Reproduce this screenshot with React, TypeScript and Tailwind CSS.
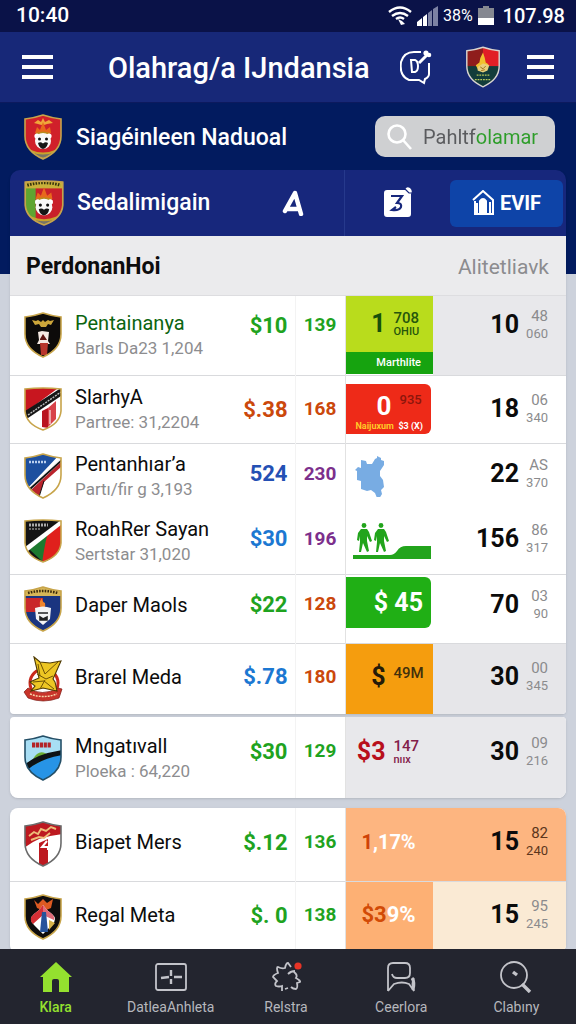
import { useState } from 'react';
import type { ReactNode } from 'react';
import clsx from 'clsx';

type Row = {
  id: string;
  name: string;
  nameColor?: string;
  sub?: string;
  price: string;
  priceColor: string;
  count: string;
  countColor: string;
  badge: ReactNode;
  badgeCell?: string;
  rank: string;
  small: [string, string];
  smallColor?: string;
  rankCell?: string;
  height: string;
  pad?: string;
};

const SHIELD = 'M2 5Q11 4 20 1Q29 4 38 5V22Q38 37 20 45Q2 37 2 22Z';
const FLAT = 'M2 3Q20 1 38 3V25Q37 38 20 44Q3 38 2 25Z';

function Crest({ id, className = 'w-10 h-[46px]' }: { id: string; className?: string }) {
  const clip = `crest-${id}`;
  const shape = ['slarhya', 'roahrer', 'nasional'].includes(id) ? FLAT : SHIELD;
  const bear = (
    <>
      <path d="M12 19l2-6 3 3 3-8 3 8 4-3 1 6-8 3z" fill="#e8681c" />
      <path d="M13 19q7-3 14 0v2H13z" fill="#b98a1e" />
      <circle cx="14" cy="22" r="2.6" fill="#fff" />
      <circle cx="26" cy="22" r="2.6" fill="#fff" />
      <ellipse cx="20" cy="27" rx="8" ry="8" fill="#f8f8f8" />
      <circle cx="16.5" cy="25" r="1.5" fill="#111" />
      <circle cx="23.5" cy="25" r="1.5" fill="#111" />
      <path d="M15 29q2.5-1.5 5 .5q2.500-2 5-.5q-1 5-5 6q-4-1-5-6z" fill="#161616" />
      <path d="M2 33l6 3q12 5 24 0l6-3-2 9q-16 6-32 0z" fill="#c9a32b" />
      <path d="M8 38q12 5 24 0v3q-12 5-24 0z" fill="#777465" />
    </>
  );
  return (
    <svg viewBox="0 0 40 46" className={clsx('shrink-0', className)} aria-hidden="true">
      <clipPath id={clip}>
        <path d={shape} />
      </clipPath>
      {id === 'brarel' ? (
        <>
          <circle cx="21" cy="27" r="14" fill="#fff" stroke="#c92a1e" strokeWidth="3" />
          <path d="M5 32q14 9 30 0l4 1-3 9q-16 6-31 0l-4-6z" fill="#c8342a" stroke="#7c1812" strokeWidth=".7" />
          <path d="M7 38q13 5 27 0" stroke="#f6d5a8" strokeWidth="1.4" strokeDasharray="2 1" fill="none" />
          <path d="M11 1l6 5 10 1 11-2-8 18 2 3 2 9-14-3-12 3 4-5-5-4 9-4z" fill="#edc623" stroke="#4e3a04" strokeWidth="1.1" />
          <path d="M17 6l5 12L36 5M14 18l9 5 7-3M10 26l11-1 10 8M22 24l-5 9M15 8l2 12" stroke="#6e5206" strokeWidth="1" fill="none" />
        </>
      ) : (
        <>
          <g clipPath={`url(#${clip})`}>
            {id === 'national' && (
              <>
                <rect width="40" height="46" fill="#d0202a" />
                <path d="M11 9l4-3 3 2 2-4 2 4 4-2 4 3-6 1q-4 2-9 0z" fill="#f0a63a" />
                {bear}
              </>
            )}
            {id === 'nasional' && (
              <>
                <rect width="40" height="46" fill="#c9202a" />
                <rect width="12" height="46" fill="#5fa531" />
                <rect width="40" height="9" fill="#c9b13a" />
                <path d="M4 6q16-5 32 0" stroke="#35320c" strokeWidth="3" strokeDasharray="1.5 1.2" fill="none" />
                {bear}
              </>
            )}
            {id === 'garuda' && (
              <>
                <rect width="40" height="46" fill="#123c3a" />
                <rect width="20" height="22" fill="#8f1d1c" />
                <rect x="20" width="20" height="22" fill="#e11f26" />
                <path d="M17 13l3-6 2 6 1 5 3 2-2 7h-9l-3-6 4-3z" fill="#f0c12f" />
                <path d="M14 23l6-4 7 2-2 6-5 2-6-2z" fill="#e7d07d" />
                <path d="M17 23l3 2 3-3M18 27l4-1" stroke="#9a6a17" strokeWidth="1" fill="none" />
                <path d="M13 32h14M11 37h18" stroke="#b8c75a" strokeWidth="1.6" strokeDasharray="2 1" />
              </>
            )}
            {id === 'pentai' && (
              <>
                <rect width="40" height="46" fill="#0d0b0a" />
                <path d="M9 8l4 1 2-1 3 2 2-2 2 2 3-2 2 1 4-1-3 5-3-1-2 3h-5l-2-3-4 1z" fill="#cda63a" />
                <path d="M15 20l4-1 7 1-1 9 2 3H14l2-4z" fill="#f5e9e3" />
                <path d="M17 27l3-5 4 6h-7z" fill="#5d1512" />
                <path d="M17 31h8l-1 12h-6z" fill="#b8352b" />
              </>
            )}
            {id === 'slarhya' && (
              <>
                <rect width="40" height="46" fill="#fff" />
                <path d="M0 0h38L0 28z" fill="#c8161f" />
                <path d="M2 25L38 2v8L2 34z" fill="#161616" />
                <path d="M5 29L38 6" stroke="#bdbdbd" strokeWidth="1.4" strokeDasharray="2 1" />
                <path d="M19 25l6-3v20l-6-1z" fill="#b91520" />
                <path d="M25 22l8-7v18l-8 8z" fill="#d8434a" />
                <path d="M27 24v14" stroke="#f6d3d3" strokeWidth="1.4" fill="none" />
              </>
            )}
            {id === 'pentanh' && (
              <>
                <rect width="40" height="46" fill="#fff" />
                <path d="M0 0h38L4 36H0z" fill="#1d4f9f" />
                <path d="M39 4L5 35l3 5L39 13z" fill="#f3f3f3" />
                <path d="M39 8L8 37l8 6 5-14L39 13z" fill="#b9232b" />
                <path d="M39 7L7 36" stroke="#111" strokeWidth="1.8" />
                <path d="M21 28l-5 16" stroke="#111" strokeWidth="1" />
                <path d="M6 9h18" stroke="#bcd0ef" strokeWidth="2.4" strokeDasharray="2 1" />
              </>
            )}
            {id === 'roahrer' && (
              <>
                <rect width="40" height="46" fill="#141414" />
                <path d="M40 2L6 31l16 15 18-6z" fill="#1c7a2f" />
                <path d="M40 3L24 18q-3 12-5 28h21z" fill="#e0201c" />
                <path d="M38 2L2 29l3 4L38 7z" fill="#fff" />
                <path d="M6 7h19" stroke="#aaa" strokeWidth="3" strokeDasharray="2 1" />
                <path d="M6 11h12" stroke="#888" strokeWidth="1.4" strokeDasharray="2 1" />
              </>
            )}
            {id === 'daper' && (
              <>
                <rect width="40" height="46" fill="#1a3580" />
                <path d="M2 12h18v14H2z" fill="#c9272a" />
                <rect width="40" height="10" fill="#d7b657" />
                <path d="M5 7q15-4 30 0" stroke="#3a2a0b" strokeWidth="2.6" strokeDasharray="1.6 1.2" fill="none" />
                <path d="M18 22q-3-5 1-10 0 4 3 5 1 3-1 6z" fill="#f0852c" />
                <path d="M12 22q8-3 16 0l-1 11-7 6-7-6z" fill="#f4f4f4" />
                <path d="M15 27h10M17 31l3 2 4-2v3h-7z" stroke="#222" strokeWidth="1.6" fill="#222" />
              </>
            )}
            {id === 'mngati' && (
              <>
                <rect width="40" height="46" fill="#a8def4" />
                <path d="M0 30L40 16v30H0z" fill="#2794e6" />
                <path d="M10 24q5-9 12-6l5 3-16 9z" fill="#6cae34" />
                <path d="M1 30q12-11 38-15v5Q16 24 3 36z" fill="#0d1215" />
                <path d="M9 10h19" stroke="#b32328" strokeWidth="5" strokeDasharray="3.2 .7" />
              </>
            )}
            {id === 'biapet' && (
              <>
                <rect width="40" height="46" fill="#fff" />
                <path d="M0 0h40v13Q14 15 0 28z" fill="#bd1920" />
                <path d="M6 15l5-4 4 2 3-5 5 2 5-4 5 2M8 19l8-3 5 1 6-5" stroke="#eebd79" strokeWidth="1.9" fill="none" />
                <path d="M16 22l9-4v27h-9z" fill="#bd1920" />
                <path d="M24 20l-5 6h6v3" stroke="#fff" strokeWidth="2" fill="none" />
              </>
            )}
            {id === 'regal' && (
              <>
                <rect width="40" height="46" fill="#0e0c0d" />
                <path d="M11 6l4 4 5-5 4 4 6-4-2 9-7 3-7-3z" fill="#dd5a22" />
                <path d="M20 11q4 6 9 9 6 5 0 11l-9 9-9-9q-6-6 0-11 6-4 9-9z" fill="#fff" />
                <path d="M20 11q-3 5-9 9-6 5-1 10l10-9z" fill="#d52f35" />
                <path d="M20 11q4 6 9 9 3 3 2 6l-11-5z" fill="#e06a78" />
                <path d="M19 18h4l2 20h-8z" fill="#26539b" />
                <path d="M26 26l6 3-6 7z" fill="#d6b24b" />
              </>
            )}
          </g>
          <path
            d={shape}
            fill="none"
            stroke={id === 'mngati' ? '#244f67' : id === 'biapet' ? '#6b6b6b' : id === 'garuda' ? '#d8d4cf' : '#c7a44a'}
            strokeWidth="1.6"
          />
        </>
      )}
    </svg>
  );
}

function Stat({ big, top, bottom, bigColor, color }: { big: string; top: string; bottom?: string; bigColor: string; color: string }) {
  return (
    <div className="flex items-center gap-2">
      <span className={clsx('w-10 text-right text-[25px] leading-8 font-bold', bigColor)}>{big}</span>
      <span className={clsx('flex flex-col text-[15px] leading-4', color)}>
        <span>{top}</span>
        {bottom && <span className="text-[11px] leading-3">{bottom}</span>}
      </span>
    </div>
  );
}

const GREEN = 'text-[#1fa31f]';
const ORANGE = 'text-[#cb480c]';
const BLUE = 'text-[#1c78d2]';
const PURPLE = 'text-[#7c2f8c]';

const mainRows: Row[] = [
  {
    id: 'pentai', name: 'Pentainanya', nameColor: 'text-[#0c6410]', sub: 'Barls Da23 1,204',
    price: '$10', priceColor: GREEN, count: '139', countColor: GREEN,
    badge: (
      <div className="flex h-[78px] flex-col bg-[#b9dc1c]">
        <div className="flex flex-1 items-center">
          <Stat big="1" top="708" bottom="OHIU" bigColor="text-[#17500b]" color="font-medium text-[#27560c]" />
        </div>
        <div className="h-[22px] bg-[#16a30f] pr-3 text-right text-[11px] leading-[22px] font-medium text-white">Marthlite</div>
      </div>
    ),
    rank: '10', small: ['48', '060'], rankCell: 'bg-[#e8e8eb]', height: 'h-[79px]', pad: 'pb-5',
  },
  {
    id: 'slarhya', name: 'SlarhyA', sub: 'Partree: 31,2204',
    price: '$.38', priceColor: ORANGE, count: '168', countColor: ORANGE,
    badge: (
      <div className="mr-[2px] h-[50px] rounded-r-md bg-[#ee2a18] pt-2">
        <div className="flex">
          <span className="w-[46px] text-right text-[26px] leading-7 font-bold text-white">0</span>
          <span className="ml-2 text-[13px] leading-4 font-medium text-[#8c160c]">935</span>
        </div>
        <div className="flex justify-between pr-2 pl-[10px] text-[9px] leading-3 font-bold whitespace-nowrap">
          <span className="text-[#ffc928]">Naijuxum</span>
          <span className="text-white">$3 (X)</span>
        </div>
      </div>
    ),
    rank: '18', small: ['06', '340'], height: 'h-[68px]',
  },
  {
    id: 'pentanh', name: 'Pentanhıar’a', sub: 'Partı/fir g 3,193',
    price: '524', priceColor: 'text-[#2450b4]', count: '230', countColor: PURPLE,
    badge: (
      <svg viewBox="0 0 30 42" className="ml-[9px] h-[42px] w-[30px]" aria-hidden="true">
        <path d="M6 5l5 1 1 3h5l3-5 2-1V1l4 2v2l3 1v4l-4 6v5l3 4 1 7-3 3 1 4-3 5-2-1-2-5-4-3-4 1-6-2v-8l-4-1V16l-2-1 3-3 3 1z" fill="#78ace3" />
      </svg>
    ),
    rank: '22', small: ['AS', '370'], height: 'h-[65px]', pad: 'pb-1',
  },
  {
    id: 'roahrer', name: 'RoahRer Sayan', sub: 'Sertstar 31,020',
    price: '$30', priceColor: BLUE, count: '196', countColor: PURPLE,
    badge: (
      <svg viewBox="0 0 80 38" className="ml-[6px] h-[38px] w-20" fill="#22a41c" aria-hidden="true">
        <g id="walker">
          <circle cx="12" cy="3.5" r="2.4" />
          <path d="M9 7h6l2 3 3 9-2 1-3-6v5l2 10-2 1-4-9-2 9h-2l1-10v-6l-1 5-2-1 1-7z" />
        </g>
        <use href="#walker" x="17" />
        <path d="M1 33h37q4 0 7-4 3-5 9-5h25v13H1z" />
      </svg>
    ),
    rank: '156', small: ['86', '317'], height: 'h-[66px]', pad: 'pb-1',
  },
  {
    id: 'daper', name: 'Daper Maols',
    price: '$22', priceColor: GREEN, count: '128', countColor: ORANGE,
    badge: (
      <div className="mr-[2px] mb-3 h-[51px] rounded-r-md bg-[#20af15] pr-2 text-right text-[25px] leading-[52px] font-bold text-white">$ 45</div>
    ),
    rank: '70', small: ['03', '90'], height: 'h-[69px]', pad: 'pb-2',
  },
  {
    id: 'brarel', name: 'Brarel Meda',
    price: '$.78', priceColor: BLUE, count: '180', countColor: ORANGE,
    badge: <div className="pb-1"><Stat big="$" top="49M" bigColor="text-[#241a08]" color="font-medium text-[#42300c] pb-2" /></div>,
    badgeCell: 'bg-[#f59d0e]',
    rank: '30', small: ['00', '345'], rankCell: 'bg-[#e6e6e9]', height: 'h-[71px]', pad: 'pb-1',
  },
];

const middleRows: Row[] = [
  {
    id: 'mngati', name: 'Mngatıvall', sub: 'Ploeka : 64,220',
    price: '$30', priceColor: GREEN, count: '129', countColor: GREEN,
    badge: <div className="pb-3"><Stat big="$3" top="147" bottom="nııx" bigColor="text-[#b8101c]" color="font-medium text-[#82204a]" /></div>,
    badgeCell: 'bg-[#e8e8eb]',
    rank: '30', small: ['09', '216'], rankCell: 'bg-[#e8e8eb]', height: 'h-[81px]', pad: 'pb-3',
  },
];

const lastRows: Row[] = [
  {
    id: 'biapet', name: 'Biapet Mers',
    price: '$.12', priceColor: GREEN, count: '136', countColor: GREEN,
    badge: (
      <div className="pb-1 pl-4 text-[20px] leading-8 font-bold">
        <span className="text-[#cf4208]">1</span><span className="text-white">,17%</span>
      </div>
    ),
    badgeCell: 'bg-[#fdb580]',
    rank: '15', small: ['82', '240'], smallColor: 'text-[#5c351c]', rankCell: 'bg-[#fdb580]', height: 'h-[73px]', pad: 'pb-1',
  },
  {
    id: 'regal', name: 'Regal Meta',
    price: '$. 0', priceColor: GREEN, count: '138', countColor: GREEN,
    badge: (
      <div className="pb-1 pl-4 text-[22px] leading-8 font-bold">
        <span className="text-[#d24a06]">$3</span><span className="text-white">9%</span>
      </div>
    ),
    badgeCell: 'bg-[#fdb074]',
    rank: '15', small: ['95', '245'], rankCell: 'bg-[#faead4]', height: 'h-[72px]', pad: 'pb-1',
  },
];

function TeamTable({ rows, label }: { rows: Row[]; label: string }) {
  return (
    <table className="w-full table-fixed bg-white" aria-label={label}>
      <colgroup>
        <col />
        <col className="w-[60px]" />
        <col className="w-[50px]" />
        <col className="w-[88px]" />
        <col className="w-[133px]" />
      </colgroup>
      <tbody>
        {rows.map((r, i) => {
          const line = i < rows.length - 1 && r.id !== 'pentanh' && 'border-b border-[#d9dadd]';
          return (
            <tr key={r.id} className={clsx(r.height, line)}>
              <th scope="row" className="p-0 text-left font-normal">
                <div className="flex items-center gap-3 pl-[13px]">
                  <Crest id={r.id} />
                  <div className={clsx('min-w-0 whitespace-nowrap', !r.sub && r.pad)}>
                    <p className={clsx('text-[20px] leading-[26px]', r.nameColor ?? 'text-[#0c0c0c]')}>{r.name}</p>
                    {r.sub && <p className="text-[17px] leading-6 text-[#8d8d8f]">{r.sub}</p>}
                  </div>
                </div>
              </th>
              <td className={clsx('p-0 pr-[7px] text-right text-[22px] font-bold whitespace-nowrap', r.priceColor, r.pad)}>{r.price}</td>
              <td className={clsx('border-r border-l border-r-[#e2e2e2] border-l-[#f3f3f3] p-0 text-center text-[19px] font-bold', r.countColor, r.pad)}>{r.count}</td>
              <td className={clsx('p-0', r.badgeCell)}>{r.badge}</td>
              <td className={clsx('p-0', r.rankCell, r.pad)}>
                <div className="flex items-center justify-end gap-[6px] pr-[18px]">
                  <span className="text-[25px] leading-8 font-bold text-[#0b0b0b]">{r.rank}</span>
                  <span className={clsx('w-[23px] text-right text-[15px] leading-[17px]', r.smallColor ?? 'text-[#8b8b8d]')}>
                    {r.small[0]}<br /><span className="text-[13px]">{r.small[1]}</span>
                  </span>
                </div>
              </td>
            </tr>
          );
        })}
      </tbody>
    </table>
  );
}

function Burger({ label, width }: { label: string; width: string }) {
  return (
    <button aria-label={label} className={clsx('flex flex-col gap-[6px]', width)}>
      <span className="h-1 w-full bg-white" />
      <span className="h-1 w-full bg-white" />
      <span className="h-1 w-full bg-white" />
    </button>
  );
}

const navItems = [
  {
    label: 'Klara',
    icon: <path d="M16 1L0 16h3v15h9V20q0-2 2-2h3q2 0 2 2v11h10V16h3z" fill="#94e02f" stroke="none" />,
  },
  {
    label: 'DatleaAnhleta',
    icon: <><rect x="1" y="3" width="30" height="26" rx="2" /><path d="M6 17l8-1M16 9v6M16 18v5M19 16h8" strokeWidth="2.4" /></>,
  },
  {
    label: 'Relstra',
    icon: <><path d="M21 6l-3-4q-2 0-3 5-3 1-7-1-2 0 0 6-5 2-5 4l4 4q-3 3-1 5 3 1 6 0v5M18 13q3-3 7-3M24 11q4 3 2 6 5 3 4 4l-3 1q1 5-1 6-3 0-5-2M15 28l3-1" /><circle cx="28" cy="5" r="3.6" fill="#e73426" stroke="none" /></>,
  },
  {
    label: 'Ceerlora',
    icon: <><path d="M3 30V7q0-5 5-5h12q5 0 5 5v5q0 5-5 5h-8q-4 0-5-4M3 30l6-7q8-3 15 0l5 7q-3-8 0-13" /><path d="M27 17q3 4 1 12" strokeWidth="3" /></>,
  },
  {
    label: 'Clabıny',
    icon: <><circle cx="14" cy="14" r="13" /><path d="M13 11l4 3M22 23l8 8" strokeWidth="3.4" /></>,
  },
];

export default function App() {
  const [active, setActive] = useState('Klara');
  const [query, setQuery] = useState('');

  return (
    <div className="flex h-screen flex-col overflow-hidden bg-[#cdd2dc] font-['Roboto','Liberation_Sans',sans-serif]">
      <div className="flex h-8 shrink-0 items-center justify-between bg-[#0a1248] pr-[11px] pl-4 text-white">
        <span className="text-[21px] font-medium">10:40</span>
        <div className="flex items-center gap-[5px]">
          <svg viewBox="0 0 24 20" className="h-5 w-6" fill="none" stroke="#fff" strokeWidth="2.4" aria-hidden="true">
            <path d="M1 6Q12-3 23 6M4 10q8-6 16 0M8 13q4-3 8 0" />
            <path d="M10 13l3 6 4-1-3-3z" fill="#fff" stroke="none" />
          </svg>
          <svg viewBox="0 0 21 20" className="h-5 w-[21px]" aria-hidden="true">
            <path d="M0 20v-4l5-4v8zM6 20v-9l4-3v12z" fill="#fff" />
            <path d="M11 20V7l4-3v16zM16 20V3l5-3v20z" fill="#7c82a4" />
          </svg>
          <span className="text-[16px]">38%</span>
          <svg viewBox="0 0 16 20" className="h-5 w-4" aria-hidden="true">
            <path d="M5 0h6v2h5v10H0V2h5z" fill="#858891" />
            <path d="M0 12h16v7H0z" fill="#fff" />
          </svg>
          <span className="ml-1 text-[20px] font-medium">107.98</span>
        </div>
      </div>

      <header className="flex h-[71px] shrink-0 items-center border-b border-[#0c1a5e] bg-[#172878] px-[22px] text-white">
        <Burger label="Menu" width="w-[31px]" />
        <h1 className="ml-[55px] flex-1 pt-1 text-[29px] font-medium whitespace-nowrap">Olahrag/a IJndansia</h1>
        <button aria-label="Obrolan" className="mr-[33px]">
          <svg viewBox="0 0 32 36" className="h-9 w-8" fill="none" stroke="#fff" strokeWidth="2" aria-hidden="true">
            <path d="M21 3H14Q4 3 1 13Q-1 27 9 31h10l5 3 1-4q4-2 4-5V14" />
            <path d="M11 11h4q3 1 3 6t-3 6h-3z" strokeWidth="2" />
            <path d="M19 14l8-8" strokeWidth="3" />
            <circle cx="26" cy="4" r="1.6" fill="#fff" />
            <circle cx="29" cy="6" r="1.3" fill="#fff" />
          </svg>
        </button>
        <Crest id="garuda" className="mr-[26px] h-[44px] w-[36px]" />
        <Burger label="Opsi" width="w-[27px]" />
      </header>

      <div className="h-[171px] shrink-0 bg-[#021b5f]">
        <div className="flex h-[67px] items-center pr-[21px] pl-[23px]">
          <Crest id="national" className="h-12 w-10" />
          <h2 className="ml-[13px] flex-1 pt-1 text-[23px] font-medium whitespace-nowrap text-white">Siagéinleen Naduoal</h2>
          <label className="flex h-[41px] w-[180px] items-center rounded-[10px] bg-[#cfd0d2] pl-3">
            <svg viewBox="0 0 26 26" className="h-[26px] w-[26px] shrink-0" fill="none" stroke="#fff" strokeWidth="2.6" aria-hidden="true">
              <circle cx="10" cy="10" r="8.5" />
              <path d="M16 16l8 9" />
            </svg>
            <input
              type="text"
              aria-label="Cari"
              value={query}
              onChange={(e) => setQuery(e.target.value)}
              placeholder="Pahltfolamar"
              className="ml-[10px] w-full min-w-0 bg-transparent text-[20px] text-[#4b4b4e] outline-none placeholder:bg-[linear-gradient(90deg,#5a5b5e_53px,#2d9d29_53px)] placeholder:bg-clip-text placeholder:text-transparent placeholder:opacity-100"
            />
          </label>
        </div>
      </div>

      <main className="-mt-[104px] min-h-0 flex-1 overflow-y-auto px-[10px] [scrollbar-width:none]">
        <section className="overflow-hidden rounded-t-[10px] rounded-b-sm shadow">
          <div className="flex h-[66px] items-center bg-[#17277c] text-white">
            <button className="flex flex-1 items-center gap-3 pl-[13px] text-[23px] font-medium">
              <Crest id="nasional" className="h-12 w-[42px]" />
              Sedalimigain
            </button>
            <button aria-label="Peringkat" className="flex h-full w-[104px] items-center justify-center border-r border-[#26398c]">
              <svg viewBox="0 0 22 26" className="h-[26px] w-[22px]" fill="none" stroke="#fff" strokeWidth="4.5" strokeLinecap="round" aria-hidden="true">
                <path d="M3 21L13 3l6 21M5 19h12" strokeLinejoin="round" />
              </svg>
            </button>
            <button aria-label="Jadwal" className="flex h-full w-[105px] items-center justify-center">
              <svg viewBox="0 0 28 32" className="h-8 w-7" aria-hidden="true">
                <path d="M3 3h18q1-4 5-2 3 3 1 6v20q0 3-3 3H3q-3 0-3-3V6q0-3 3-3z" fill="#fff" />
                <path d="M7 9h11l-5 7q5 0 4 4-2 4-9 3l4-3" fill="none" stroke="#17277c" strokeWidth="2.2" />
                <path d="M21 2l4 4h3" fill="none" stroke="#17277c" strokeWidth="1.2" />
              </svg>
            </button>
            <button className="mr-[3px] flex h-[47px] w-[113px] items-center justify-center gap-[6px] rounded-md bg-[#0e44a8] text-[20px] font-bold">
              <svg viewBox="0 0 22 26" className="h-[26px] w-[22px]" fill="none" stroke="#fff" strokeWidth="2" aria-hidden="true">
                <path d="M1 10L11 1l10 9v14H3V11" />
                <path d="M8 24V11q3-4 6 0v13" fill="#fff" />
                <path d="M5 13v11M18 12v12" />
              </svg>
              EVIF
            </button>
          </div>
          <div className="flex h-[60px] items-center justify-between border-b border-[#dddde0] bg-[#ebebed] pt-1 pr-[17px] pl-4">
            <h3 className="text-[23px] font-bold text-[#0d0d0e]">PerdonanHoi</h3>
            <a href="#atlet" className="text-[21px] text-[#8c8c8f]">Alitetliavk</a>
          </div>
          <TeamTable rows={mainRows} label="Perdonanhoi" />
        </section>
        <section className="mt-[3px] overflow-hidden rounded-t-sm rounded-b-[8px] shadow">
          <TeamTable rows={middleRows} label="Mngativall" />
        </section>
        <section className="mt-[10px] overflow-hidden rounded-[8px] shadow">
          <TeamTable rows={lastRows} label="Biapet" />
        </section>
      </main>

      <nav className="grid h-[75px] shrink-0 grid-cols-5 bg-[#23252f]">
        {navItems.map((item) => (
          <button
            key={item.label}
            onClick={() => setActive(item.label)}
            className={clsx(
              'flex flex-col items-center gap-[5px] pt-3 pr-1 text-[14px] leading-[18px]',
              active === item.label ? 'font-medium text-[#94e02f]' : 'text-[#b6b7bd]'
            )}
          >
            <svg viewBox="0 0 32 32" className="h-8 w-8" fill="none" stroke="#c3c4ca" strokeWidth="1.8" aria-hidden="true">
              {item.icon}
            </svg>
            {item.label}
          </button>
        ))}
      </nav>
    </div>
  );
}
